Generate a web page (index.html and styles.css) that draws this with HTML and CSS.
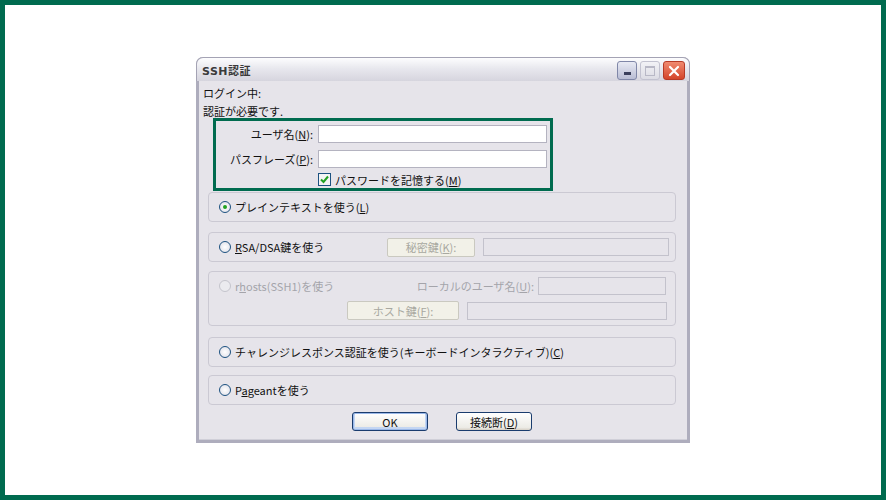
FILE: index.html
```html
<!DOCTYPE html>
<html lang="ja">
<head>
  <meta charset="UTF-8">
  <title>SSH認証</title>
  <link rel="stylesheet" href="styles.css">
</head>
<body>
  <div class="frame">
    <div class="window">
      <!-- Title bar -->
      <div class="titlebar">
        <span class="title">SSH認証</span>
        <div class="title-buttons">
          <span class="tb tb-min"><i></i></span>
          <span class="tb tb-max"><i></i></span>
          <span class="tb tb-close">
            <svg width="12" height="12" viewBox="0 0 12 12"><path d="M2 2 L10 10 M10 2 L2 10" stroke="#fff" stroke-width="2.2" stroke-linecap="round"/></svg>
          </span>
        </div>
      </div>

      <div class="content">
        <div class="info">
          <div>ログイン中:</div>
          <div>認証が必要です.</div>
        </div>

        <!-- Highlighted credentials -->
        <div class="creds">
          <div class="row">
            <label class="lbl">ユーザ名(<u>N</u>):</label>
            <input type="text" class="field">
          </div>
          <div class="row">
            <label class="lbl">パスフレーズ(<u>P</u>):</label>
            <input type="password" class="field">
          </div>
          <div class="row check-row">
            <span class="checkbox">
              <svg width="9" height="9" viewBox="0 0 9 9"><path d="M1 4.5 L3.5 7 L8 1.5" fill="none" stroke="#21a121" stroke-width="2"/></svg>
            </span>
            <span>パスワードを記憶する(<u>M</u>)</span>
          </div>
        </div>

        <div class="group g-plain">
          <span class="radio checked"></span>
          <span>プレインテキストを使う(<u>L</u>)</span>
        </div>

        <div class="group g-rsa">
          <div class="opt rsa"><span class="radio"></span><span><u>R</u>SA/DSA鍵を使う</span></div>
          <span class="btn-dis key-btn">秘密鍵(<u>K</u>):</span>
          <span class="box-dis key-box"></span>
        </div>

        <div class="group group-tall disabled">
          <div class="line">
            <div class="opt rhosts"><span class="radio"></span><span>r<u>h</u>osts(SSH1)を使う</span></div>
            <span class="local-lbl">ローカルのユーザ名(<u>U</u>):</span>
            <span class="box-dis local-box"></span>
          </div>
          <div class="line line2">
            <span class="btn-dis host-btn">ホスト鍵(<u>F</u>):</span>
            <span class="box-dis host-box"></span>
          </div>
        </div>

        <div class="group g-chal">
          <span class="radio"></span>
          <span>チャレンジレスポンス認証を使う(キーボードインタラクティブ)(<u>C</u>)</span>
        </div>

        <div class="group g-pageant">
          <span class="radio"></span>
          <span>P<u>a</u>geantを使う</span>
        </div>

        <div class="buttons">
          <button class="default">OK</button>
          <button>接続断(<u>D</u>)</button>
        </div>
      </div>
    </div>
  </div>
</body>
</html>
```

FILE: styles.css
```css
body {
  margin: 0;
  font-family: "Noto Sans CJK JP", "Liberation Sans", sans-serif;
  font-size: 11px;
  color: #111;
}

.frame {
  width: 886px;
  height: 500px;
  box-sizing: border-box;
  border: 5px solid #006b4f;
  background: #ffffff;
  padding: 52px 0 0 191px;
}

.window {
  width: 494px;
  height: 386px;
  box-sizing: border-box;
  border: 3px solid #aeadbd;
  border-top: none;
  border-radius: 7px 7px 0 0;
  background: #e6e4ea;
  box-shadow: inset 0 -1px 0 #d0cfd8;
}

.titlebar {
  height: 24px;
  margin: 0 -3px;
  border-radius: 7px 7px 0 0;
  border: 1px solid #a4a3b4;
  border-bottom: none;
  box-sizing: border-box;
  background: linear-gradient(#fdfdfe, #e8e8ee 45%, #d6d5de);
  display: flex;
  align-items: center;
  justify-content: space-between;
  padding: 0 4px 0 5px;
}

.title {
  font-family: "DejaVu Sans", "Noto Sans CJK JP", sans-serif;
  font-weight: bold;
  font-size: 11px;
  color: #3a3a3a;
  letter-spacing: 0.5px;
}

.title-buttons {
  display: flex;
  gap: 3px;
  margin-top: 2px;
}

.tb {
  width: 20px;
  height: 19px;
  box-sizing: border-box;
  border-radius: 3px;
  display: flex;
  align-items: center;
  justify-content: center;
}

.tb-min {
  background: linear-gradient(#e8eaf4, #b9bdd4);
  border: 1px solid #8087a8;
}

.tb-min i {
  width: 7px;
  height: 3px;
  background: #3a3f5c;
  margin-top: 6px;
}

.tb-max {
  background: linear-gradient(#f2f2f6, #dcdce4);
  border: 1px solid #c2c2d0;
}

.tb-max i {
  width: 8px;
  height: 7px;
  border: 1px solid #b8b8c6;
  border-top-width: 2px;
}

.tb-close {
  width: 22px;
  background: linear-gradient(#f08a70, #d4452a);
  border: 1px solid #b63a26;
}

.content {
  padding: 0 0 0 4px;
}

.info {
  padding-top: 3px;
  line-height: 18px;
}

.creds {
  width: 340px;
  height: 73px;
  box-sizing: border-box;
  margin: -2px 0 0 10px;
  border: 3px solid #006b4f;
  padding: 4px 3px 0 0;
  display: flex;
  flex-direction: column;
  gap: 7px;
}

.row {
  display: flex;
  align-items: center;
  height: 18px;
}

.lbl {
  width: 97px;
  text-align: right;
  margin-right: 5px;
}

.field {
  width: 229px;
  height: 18px;
  box-sizing: border-box;
  border: 1px solid #b4b3c0;
  background: #ffffff;
  margin: 0;
  padding: 0;
}

.check-row {
  margin-top: -4px;
  padding-left: 102px;
  gap: 4px;
}

.checkbox {
  width: 13px;
  height: 13px;
  box-sizing: border-box;
  border: 1px solid #1c5180;
  background: #f4f4f4;
  display: flex;
  align-items: center;
  justify-content: center;
}

.group {
  width: 468px;
  height: 30px;
  box-sizing: border-box;
  margin-left: 5px;
  border: 1px solid #cbc9d3;
  border-radius: 4px;
  padding-left: 10px;
  display: flex;
  align-items: center;
  gap: 4px;
}

.g-plain {
  margin-top: 1px;
  margin-bottom: 10px;
}

.g-rsa {
  margin-bottom: 9px;
}

.g-chal {
  margin-bottom: 8px;
}

.radio {
  width: 12px;
  height: 12px;
  box-sizing: border-box;
  border: 1px solid #1c5180;
  border-radius: 50%;
  background: radial-gradient(#ffffff, #dcdce6);
  display: inline-flex;
  align-items: center;
  justify-content: center;
  flex: none;
}

.radio.checked::after {
  content: "";
  width: 4px;
  height: 4px;
  border-radius: 50%;
  background: #21a121;
}

.opt {
  display: flex;
  align-items: center;
  gap: 4px;
}

.rsa {
  width: 164px;
}

.btn-dis {
  height: 19px;
  box-sizing: border-box;
  border: 1px solid #cac9c0;
  border-radius: 2px;
  background: #f2f1e8;
  color: #a8a8a0;
  display: flex;
  align-items: center;
  justify-content: center;
}

.box-dis {
  height: 18px;
  box-sizing: border-box;
  border: 1px solid #c3c2cc;
}

.key-btn {
  width: 88px;
}

.key-box {
  width: 186px;
  margin-left: 4px;
}

.group-tall {
  height: 55px;
  flex-direction: column;
  align-items: stretch;
  justify-content: center;
  gap: 6px;
  margin-bottom: 11px;
}

.disabled {
  color: #a4a4aa;
}

.disabled .radio {
  border-color: #c4c4cc;
  background: #ebebef;
}

.line {
  display: flex;
  align-items: center;
}

.rhosts {
  width: 181px;
}

.local-lbl {
  width: 134px;
  text-align: right;
  margin-right: 4px;
}

.local-box {
  width: 128px;
}

.line2 {
  padding-left: 128px;
}

.host-btn {
  width: 112px;
}

.host-box {
  width: 200px;
  margin-left: 8px;
}

.buttons {
  display: flex;
  justify-content: center;
  gap: 28px;
  margin: 7px 0 0 -6px;
}

button {
  width: 76px;
  height: 19px;
  box-sizing: border-box;
  border: 1px solid #1a3c6e;
  border-radius: 3px;
  background: linear-gradient(#ffffff, #ecebe6 85%, #d6d0c5);
  font-family: "Noto Sans CJK JP", "Liberation Sans", sans-serif;
  font-size: 11px;
  color: #111;
  padding: 0;
}

button.default {
  box-shadow: inset 0 0 0 1px #9ab8e8, inset 0 -1px 0 2px #c4d6f2;
}
```
